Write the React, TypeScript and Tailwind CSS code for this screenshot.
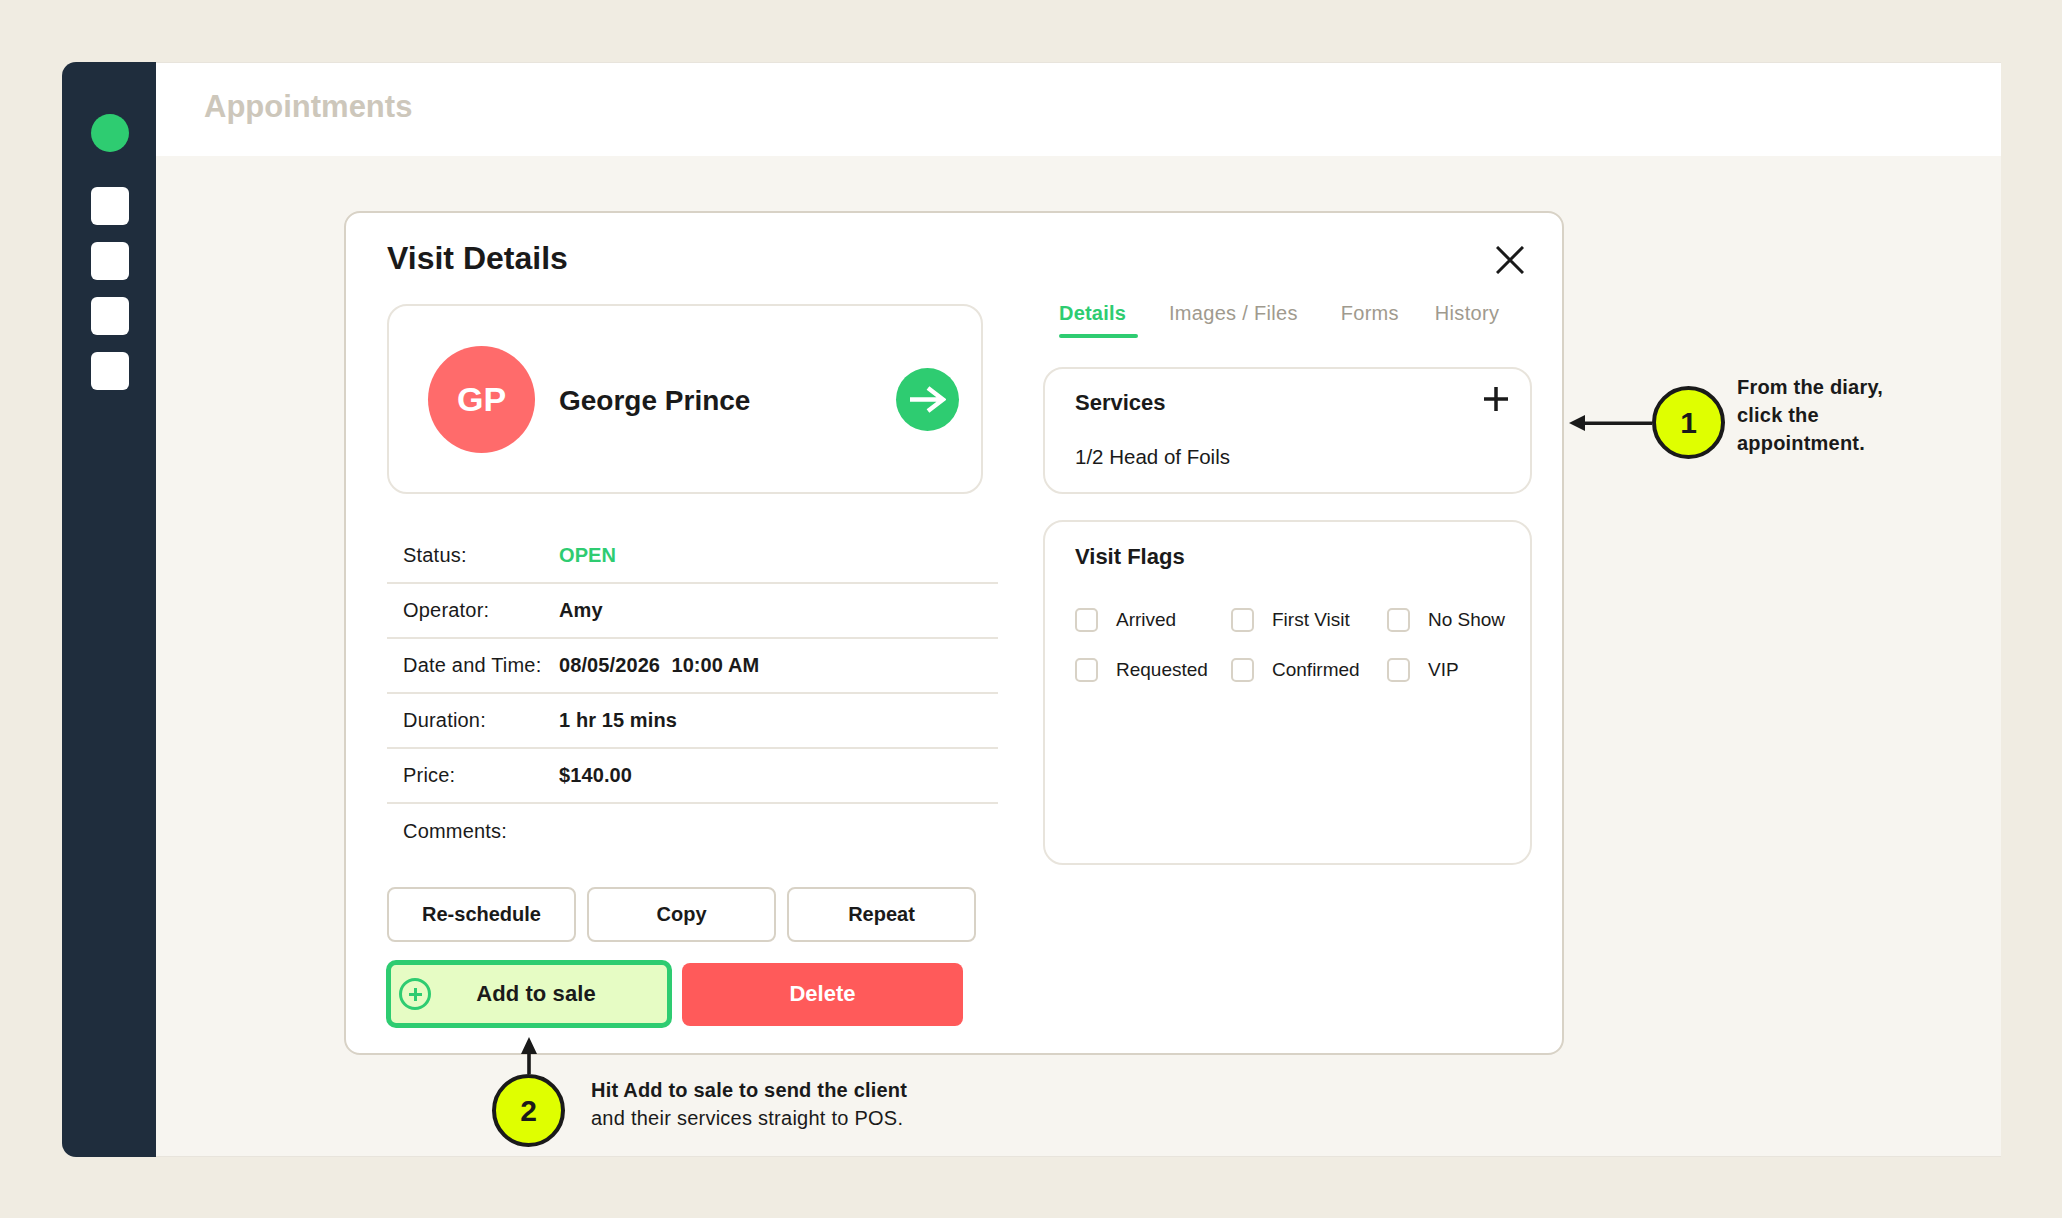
const rows = [
  { label: 'Status:', value: 'OPEN', green: true },
  { label: 'Operator:', value: 'Amy' },
  { label: 'Date and Time:', value: '08/05/2026  10:00 AM' },
  { label: 'Duration:', value: '1 hr 15 mins' },
  { label: 'Price:', value: '$140.00' },
  { label: 'Comments:', value: '' },
];

const flags = ['Arrived', 'First Visit', 'No Show', 'Requested', 'Confirmed', 'VIP'];

const Callout = ({ n }: { n: number }) => (
  <div className="flex h-[73px] w-[73px] items-center justify-center rounded-full border-4 border-[#1a1a1a] bg-[#dfff00] text-[30px] font-bold text-[#1a1a1a]">
    {n}
  </div>
);

export default function App() {
  return (
    <div className="h-[1218px] w-full bg-[#f0ece2] p-[62px] font-['Liberation_Sans',Arial,sans-serif] text-[#1a1a1a]">
      <div className="relative flex h-[1095px] w-[1939px]">
        {/* Sidebar */}
        <aside className="flex w-[94px] flex-col items-center rounded-l-[14px] bg-[#1f2d3d] pl-[2px] pt-[52px]">
          <div className="mb-[35px] h-[38px] w-[38px] rounded-full bg-[#2ecc71]" />
          <div className="flex flex-col gap-[17px]">
            {[0, 1, 2, 3].map(i => (
              <div key={i} className="h-[38px] w-[38px] rounded-[6px] bg-white" />
            ))}
          </div>
        </aside>

        <div className="flex flex-1 flex-col border-y border-[#e8e4dc] bg-[#f7f5f0]">
          <header className="flex h-[93px] items-center bg-white pb-[5px] pl-[48px]">
            <h1 className="text-[31px] font-bold text-[#cdc7bb]">Appointments</h1>
          </header>

          <main className="pl-[188px] pt-[55px]">
            {/* Modal */}
            <div className="relative h-[844px] w-[1220px] rounded-[16px] border-2 border-[#d8d2c6] bg-white pl-[41px] pr-[30px] pt-[22px]">
              <h2 className="text-[32px] font-bold leading-[46px]">Visit Details</h2>
              <button className="absolute right-[38px] top-[33px]">
                <svg width="28" height="28" viewBox="0 0 28 28" fill="none" stroke="#1a1a1a" strokeWidth="3">
                  <path d="M1 1l26 26M27 1 1 27" />
                </svg>
              </button>

              <div className="mt-[23px] flex justify-between">
                {/* Left column */}
                <div className="w-[611px]">
                  <div className="flex h-[190px] w-[596px] items-center rounded-[20px] border-2 border-[#e8e4dc] pl-[39px] pr-[22px]">
                    <div className="flex h-[107px] w-[107px] items-center justify-center rounded-full bg-[#ff6b6b] text-[34px] font-bold text-white">
                      GP
                    </div>
                    <div className="ml-[24px] flex-1 pt-[4px] text-[28px] font-bold">George Prince</div>
                    <div className="flex h-[63px] w-[63px] items-center justify-center rounded-full bg-[#2ecc71]">
                      <svg width="36" height="27" viewBox="0 0 36 27" fill="none" stroke="white" strokeWidth="4.5">
                        <path d="M0 13.5h32M18 2l15 11.5L18 25" />
                      </svg>
                    </div>
                  </div>

                  <div className="mt-[35px]">
                    {rows.map((r, i) => (
                      <div key={r.label} className={`flex h-[55px] items-center pb-[2px] pl-[16px] text-[20px] ${i < 5 ? 'border-b-2 border-[#e8e4dc]' : ''}`}>
                        <span className="w-[156px] tracking-[0.2px]">{r.label}</span>
                        <span className={`whitespace-pre font-bold tracking-[0.1px] ${r.green ? 'text-[#2ecc71]' : ''}`}>{r.value}</span>
                      </div>
                    ))}
                  </div>

                  <div className="mt-[28px] flex gap-[11px]">
                    {['Re-schedule', 'Copy', 'Repeat'].map(b => (
                      <button key={b} className="h-[55px] w-[189px] rounded-[8px] border-2 border-[#d8d2c6] bg-white pb-[1px] text-[20px] font-bold">
                        {b}
                      </button>
                    ))}
                  </div>

                  <div className="-ml-[1px] mt-[18px] flex items-center gap-[10px]">
                    <button className="relative flex h-[68px] w-[286px] items-center justify-center rounded-[10px] border-[5px] border-[#2ecc71] bg-[#e6fcc4] pb-[1px] pl-[14px] text-[22px] font-bold tracking-[0.1px]">
                      <span className="absolute left-[8px] top-[13px] flex h-[32px] w-[32px] items-center justify-center rounded-full border-[3.5px] border-[#2ecc71]">
                        <svg width="13" height="13" viewBox="0 0 13 13" fill="none" stroke="#2ecc71" strokeWidth="3">
                          <path d="M6.5 0v13M0 6.5h13" />
                        </svg>
                      </span>
                      Add to sale
                    </button>
                    <button className="h-[63px] w-[281px] rounded-[8px] bg-[#ff5a5a] pb-[1px] text-[22px] font-bold text-white">Delete</button>
                  </div>
                </div>

                {/* Right column */}
                <div className="w-[489px]">
                  <div className="flex h-[63px] items-start text-[20px] leading-[18px] tracking-[0.3px] text-[#a09a8e]">
                    <div className="relative ml-[16px] h-[34px] w-[79px] font-bold tracking-[0.2px] text-[#2ecc71]">
                      Details
                      <div className="absolute bottom-0 left-0 right-0 h-[4px] rounded-full bg-[#2ecc71]" />
                    </div>
                    <span className="ml-[31px]">Images / Files</span>
                    <span className="ml-[43px]">Forms</span>
                    <span className="ml-[36px]">History</span>
                  </div>

                  <div className="relative h-[127px] rounded-[20px] border-2 border-[#e8e4dc] pl-[30px] pt-[17px]">
                    <h3 className="text-[22px] font-bold">Services</h3>
                    <svg width="24" height="24" viewBox="0 0 24 24" fill="none" stroke="#1a1a1a" strokeWidth="3.5" className="absolute right-[22px] top-[18px]">
                      <path d="M12 0v24M0 12h24" />
                    </svg>
                    <p className="mt-[23px] text-[20.5px]">1/2 Head of Foils</p>
                  </div>

                  <div className="mt-[26px] h-[345px] rounded-[20px] border-2 border-[#e8e4dc] pl-[30px] pt-[18px]">
                    <h3 className="text-[22px] font-bold">Visit Flags</h3>
                    <div className="mt-[33px] grid grid-cols-[156px_156px_1fr] gap-y-[21.5px]">
                      {flags.map(f => (
                        <label key={f} className="flex items-center gap-[18px] text-[19px]">
                          <span className="h-[24px] w-[23px] rounded-[5px] border-2 border-[#d8d2c6]" />
                          {f}
                        </label>
                      ))}
                    </div>
                  </div>
                </div>
              </div>
            </div>
          </main>
        </div>

        {/* Callout 1 */}
        <div className="absolute left-[1507px] top-[324px] flex items-center">
          <svg width="83" height="18" viewBox="0 0 83 18" fill="#1a1a1a">
            <path d="M0 9 16 1v6.5h67v3.5H16V17z" />
          </svg>
          <Callout n={1} />
        </div>
        <p className="absolute left-[1675px] top-[311px] text-[20px] font-bold leading-[28px] tracking-[0.2px]">
          From the diary,
          <br />
          click the
          <br />
          appointment.
        </p>

        {/* Callout 2 */}
        <div className="absolute left-[430px] top-[975px] flex flex-col items-center">
          <svg width="18" height="37" viewBox="0 0 18 37" fill="#1a1a1a">
            <path d="M9 0 17 17h-6.2v20H7.2V17H1z" />
          </svg>
          <Callout n={2} />
        </div>
        <p className="absolute left-[529px] top-[1014px] text-[20px] leading-[28px] tracking-[0.25px]">
          <b className="tracking-[0.2px]">Hit Add to sale to send the client</b>
          <br />
          and their services straight to POS.
        </p>
      </div>
    </div>
  );
}
